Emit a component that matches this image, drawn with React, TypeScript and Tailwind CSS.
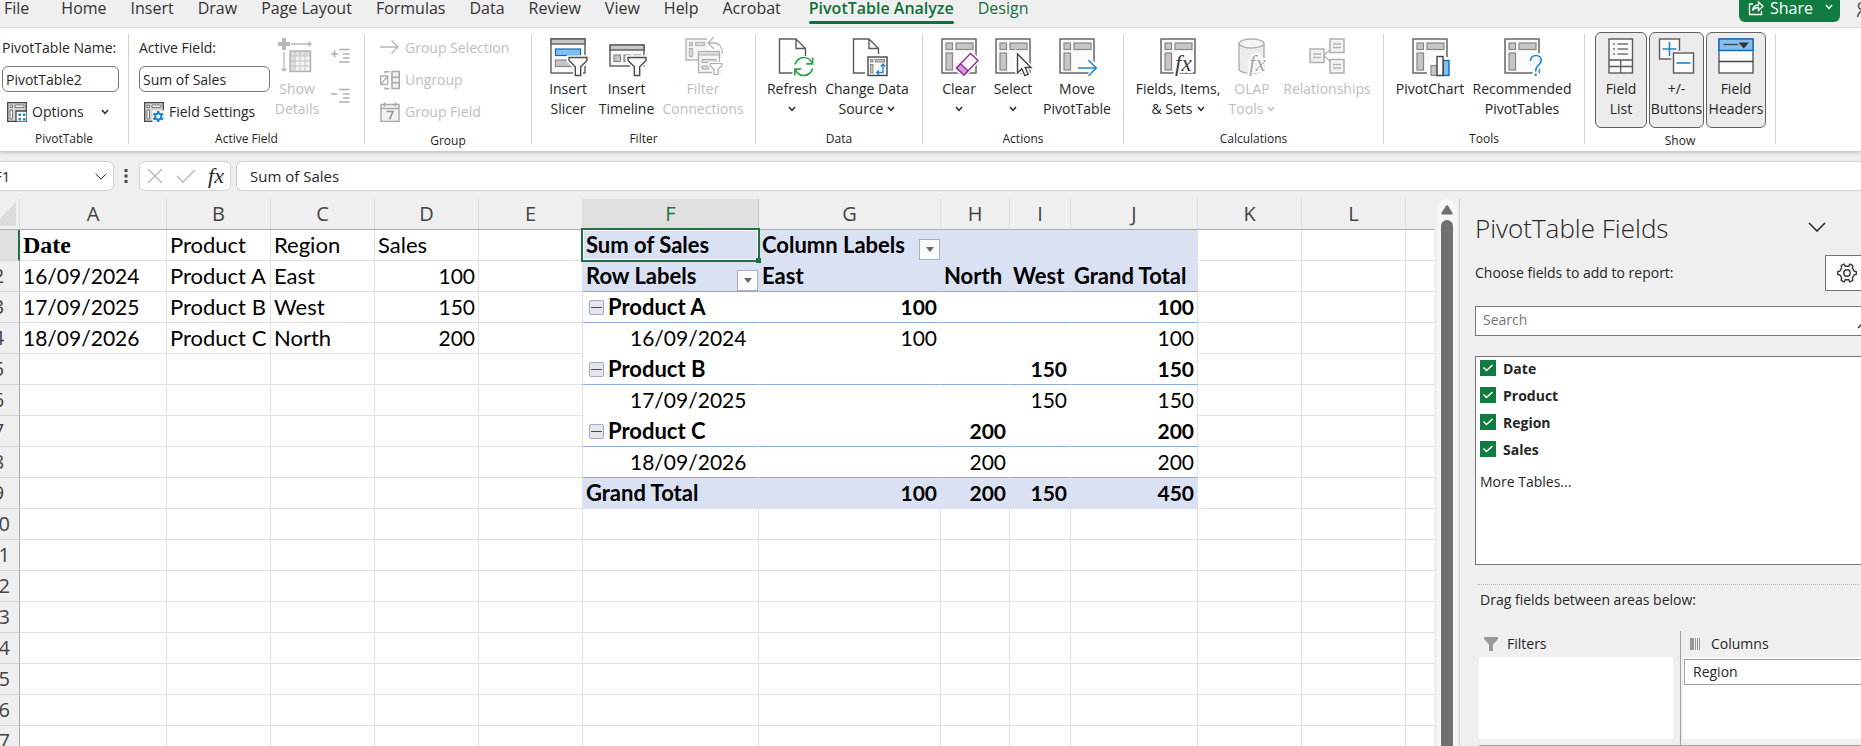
import { useState } from 'react';
import type { ReactNode } from 'react';

type IconProps = { className?: string };

/* ---------- small glyphs ---------- */

function Caret({ className = '' }: IconProps) {
  return (
    <svg viewBox="0 0 8 6" className={`inline-block h-[6px] w-[8px] ${className}`} fill="none" stroke="currentColor" strokeWidth="1.5">
      <path d="M1 1l3 3.4L7 1" />
    </svg>
  );
}

function Chevron({ className = '' }: IconProps) {
  return (
    <svg viewBox="0 0 18 10" className={className} fill="none" stroke="currentColor" strokeWidth="1.5">
      <path d="M1 1l8 8 8-8" />
    </svg>
  );
}

/* ---------- ribbon icons, 40 x 41 ---------- */

function BigIcon({ children }: { children: ReactNode }) {
  return (
    <svg viewBox="0 0 40 41" className="h-[41px] w-[40px] shrink-0 overflow-visible" fill="none">
      {children}
    </svg>
  );
}

function PivotBase() {
  return (
    <>
      <rect x="3" y="1" width="34" height="34" fill="#fafafa" stroke="#5b5b5b" strokeWidth="1.4" />
      <g fill="#c8c6c4" stroke="#8a8886" strokeWidth="1.2">
        <rect x="7" y="5" width="6.5" height="6.5" />
        <rect x="17" y="5" width="17" height="6.5" />
        <rect x="7" y="15" width="6.5" height="17" />
      </g>
    </>
  );
}

const FUNNEL = 'M21 19.5h18v3l-6.3 6.3v8.7h-5.4v-8.7L21 22.5z';

function Funnel() {
  return (
    <>
      <path d={FUNNEL} stroke="#fff" strokeWidth="4.5" />
      <path d={FUNNEL} fill="#fafafa" stroke="#4a4a4a" strokeWidth="1.4" />
    </>
  );
}

function SlicerIcon() {
  return (
    <BigIcon>
      <rect x="3" y="1" width="34" height="34" fill="#fafafa" stroke="#5b5b5b" strokeWidth="1.4" />
      <rect x="3" y="1" width="34" height="5" fill="#c8c6c4" stroke="#5b5b5b" strokeWidth="1.4" />
      <rect x="7.5" y="11" width="25" height="6.5" fill="#83beec" stroke="#0f6cbd" strokeWidth="1.2" />
      <rect x="7.5" y="22" width="18" height="6.5" fill="#c8c6c4" stroke="#8a8886" strokeWidth="1.2" />
      <Funnel />
    </BigIcon>
  );
}

function TimelineIcon() {
  return (
    <BigIcon>
      <rect x="3" y="7" width="34" height="21" fill="#fafafa" stroke="#5b5b5b" strokeWidth="1.4" />
      <rect x="3" y="7" width="34" height="5" fill="#c8c6c4" stroke="#5b5b5b" strokeWidth="1.4" />
      <g fill="#c8c6c4" stroke="#8a8886" strokeWidth="1.2">
        <rect x="7" y="17" width="6.5" height="6.5" />
        <rect x="17" y="17" width="6.5" height="6.5" />
        <rect x="27" y="17" width="6.5" height="6.5" />
      </g>
      <Funnel />
    </BigIcon>
  );
}

function ConnectionsIcon() {
  const funnel = 'M27 25.5h12v2l-4 4v5h-4v-5l-4-4z';
  return (
    <BigIcon>
      <path d="M24 1H3v21h12V12h9z" fill="#f5f5f5" />
      <path d="M24 1H3v21h12" stroke="#b5b5b5" strokeWidth="1.4" />
      <g fill="#dcdcdc" stroke="#b5b5b5" strokeWidth="1.2">
        <rect x="6.5" y="4.5" width="3" height="3" />
        <rect x="12.5" y="4.5" width="9" height="3" />
        <rect x="6.5" y="10.5" width="3" height="8" />
      </g>
      <path d="M31-1l-6 6 6 6M25.5 5H31c5 0 8.500 4 8.500 11" stroke="#b5b5b5" strokeWidth="1.3" />
      <rect x="15.5" y="13.5" width="21" height="21" fill="#f5f5f5" stroke="#b0b0b0" strokeWidth="1.4" />
      <rect x="15.5" y="13.5" width="21" height="3.5" fill="#dcdcdc" stroke="#b0b0b0" />
      <path d="M19 21.5h14v3H19zM19 28h7v3h-7z" fill="#dcdcdc" stroke="#a8a8a8" />
      <path d={funnel} stroke="#fff" strokeWidth="3.5" />
      <path d={funnel} fill="#fafafa" stroke="#b0b0b0" strokeWidth="1.2" />
    </BigIcon>
  );
}

function RefreshIcon() {
  return (
    <BigIcon>
      <path d="M20.5 35H7.5V1H24l9.500 9.500V18M24 1v9.500h9.500" stroke="#5b5b5b" strokeWidth="1.4" />
      <path d="M23 26.500c1-4 4.600-7 8.800-7 4 0 7 2.500 8.400 6M40.600 19.500v6.300h-6.300M40.600 30.500c-1 4-4.600 7-8.800 7-4 0-7-2.500-8.400-6M22.800 37.500v-6.300h6.300" stroke="#2f9e4f" strokeWidth="1.7" />
    </BigIcon>
  );
}

function SourceIcon() {
  return (
    <BigIcon>
      <path d="M18 35H6.500V1H22l9.500 9.500V16M22 1v9.500h9.500" stroke="#5b5b5b" strokeWidth="1.4" />
      <rect x="21" y="19" width="19" height="18.5" fill="#fafafa" stroke="#444" strokeWidth="1.4" />
      <g fill="#c8c6c4" stroke="#8a8886">
        <rect x="23.5" y="21.5" width="2.5" height="2.5" />
        <rect x="28.5" y="21.5" width="9" height="2.5" />
        <rect x="23.5" y="26.5" width="2.5" height="8.5" />
      </g>
      <path d="M30 34.500h6v-8M33.800 28.500l2.200-2.400 2.200 2.400M32 32.300l-2.300 2.200 2.300 2.200" stroke="#1f86cf" strokeWidth="1.4" />
    </BigIcon>
  );
}

function ClearIcon() {
  return (
    <BigIcon>
      <PivotBase />
      <path d="M17 30.500L31.500 15l8 7L25 38z" fill="#fff" stroke="#fff" strokeWidth="4" />
      <path d="M17.500 30L31.500 15.500l7.500 7L25 37z" fill="#fff" stroke="#9b2fa5" strokeWidth="1.5" />
      <path d="M17.500 30l4-4.200 7.500 7L25 37z" fill="#d59bdb" stroke="#9b2fa5" strokeWidth="1.5" />
    </BigIcon>
  );
}

function SelectIcon() {
  const d = 'M24.500 16v19l4.300-4.200 3 6.800 3.400-1.500-3-6.600h5.800z';
  return (
    <BigIcon>
      <PivotBase />
      <path d={d} stroke="#fff" strokeWidth="4.5" />
      <path d={d} fill="#fff" stroke="#444" strokeWidth="1.4" />
    </BigIcon>
  );
}

function MoveIcon() {
  return (
    <BigIcon>
      <PivotBase />
      <path d="M20 30h20M31 21l9 9-9 9" stroke="#fff" strokeWidth="5" />
      <path d="M21 30h18M31.500 22.200l7.800 7.800-7.800 7.800" stroke="#1f86cf" strokeWidth="1.6" />
    </BigIcon>
  );
}

function FxMark({ fill }: { fill: string }) {
  return (
    <text x="17" y="33" fontFamily="Liberation Serif, serif" fontStyle="italic" fontSize="23" fill={fill} stroke="#fff" strokeWidth="4" paintOrder="stroke">
      fx
    </text>
  );
}

function FieldsIcon() {
  return (
    <BigIcon>
      <PivotBase />
      <FxMark fill="#3b3b3b" />
    </BigIcon>
  );
}

function OlapIcon() {
  return (
    <BigIcon>
      <path d="M7 5.500v25.500c0 2.500 5.500 4.500 12.500 4.500S32 33.500 32 31V5.500" fill="#ececec" stroke="#b0b0b0" strokeWidth="1.4" />
      <ellipse cx="19.5" cy="5.5" rx="12.5" ry="4.5" fill="#f4f4f4" stroke="#b0b0b0" strokeWidth="1.4" />
      <FxMark fill="#a8a8a8" />
    </BigIcon>
  );
}

function RelationshipsIcon() {
  return (
    <BigIcon>
      <path d="M17 17.500l7-7M17 17.500l7 7" stroke="#b5b5b5" strokeWidth="1.4" />
      <g fill="#f2f2f2" stroke="#b0b0b0" strokeWidth="1.5">
        <rect x="3" y="11" width="14" height="13.5" />
        <rect x="23" y="1" width="14" height="13.5" />
        <rect x="23" y="21.5" width="14" height="13.5" />
      </g>
      <path d="M6 16h8M6 19.500h8M26 6h8M26 9.500h8M26 26.500h8M26 30h8" stroke="#b5b5b5" strokeWidth="1.3" />
    </BigIcon>
  );
}

function ChartIcon() {
  return (
    <BigIcon>
      <PivotBase />
      <path d="M18.500 38V25.500h6v-9h8v4h7V38z" fill="#fff" stroke="#fff" strokeWidth="3" />
      <rect x="21" y="27.5" width="6" height="10" fill="#c8c6c4" stroke="#8a8886" strokeWidth="1.2" />
      <rect x="33" y="22.5" width="6" height="15" fill="#83beec" stroke="#0f6cbd" strokeWidth="1.4" />
      <rect x="27" y="18.5" width="6" height="19" fill="#fff" stroke="#444" strokeWidth="1.4" />
    </BigIcon>
  );
}

function RecommendedIcon() {
  const d = 'M28.500 23c0-3.400 2.300-5.500 5.400-5.500s5.400 2 5.400 5c0 4.500-5.600 4.800-5.600 9.500v1.500';
  return (
    <BigIcon>
      <PivotBase />
      <path d={d} stroke="#fff" strokeWidth="5.5" />
      <path d="M33.700 34v4" stroke="#fff" strokeWidth="6" />
      <path d={d} stroke="#1f86cf" strokeWidth="1.7" />
      <path d="M33.700 35.500v2.500" stroke="#1f86cf" strokeWidth="2" />
    </BigIcon>
  );
}

function FieldListIcon() {
  return (
    <BigIcon>
      <rect x="8" y="1" width="23.5" height="34" fill="#fafafa" stroke="#5b5b5b" strokeWidth="1.4" />
      <path d="M8 22h23.500M8 28.500h23.500M19.700 22v13" stroke="#5b5b5b" strokeWidth="1.3" />
      <path d="M12 6h2M16.500 6H27M12 11h2M16.500 11H27M12 16h2M16.500 16H27" stroke="#767676" strokeWidth="1.3" />
    </BigIcon>
  );
}

function PlusMinusIcon() {
  return (
    <BigIcon>
      <rect x="2.5" y="1" width="20" height="20" fill="#fafafa" stroke="#5b5b5b" strokeWidth="1.4" />
      <path d="M12.500 4v14M5.500 11h14" stroke="#1f86cf" strokeWidth="1.6" />
      <rect x="16.5" y="15" width="20" height="20" fill="#fafafa" stroke="#ebebeb" strokeWidth="4.5" />
      <rect x="16.5" y="15" width="20" height="20" fill="#fafafa" stroke="#5b5b5b" strokeWidth="1.4" />
      <path d="M19.500 25h14" stroke="#1f86cf" strokeWidth="1.6" />
    </BigIcon>
  );
}

function HeadersIcon() {
  return (
    <BigIcon>
      <rect x="3" y="1" width="34" height="34" fill="#fafafa" stroke="#5b5b5b" strokeWidth="1.4" />
      <path d="M3 23.500h34" stroke="#444" strokeWidth="1.4" />
      <rect x="3" y="1" width="34" height="11.5" fill="#83beec" stroke="#0f6cbd" strokeWidth="1.4" />
      <path d="M7.500 6.500H22" stroke="#444" strokeWidth="1.3" />
      <path d="M22.500 4.500h10.500l-5.200 6z" fill="#333" />
    </BigIcon>
  );
}

function ShowDetailsIcon() {
  return (
    <BigIcon>
      <path d="M7 0v12M1 6h12" stroke="#b8b8b8" strokeWidth="4" />
      <path d="M14 6h20M31.500 3.500L34 6l-2.500 2.500M7 14v19M4.500 30.500L7 33l2.500-2.500" stroke="#b8b8b8" strokeWidth="1.3" />
      <rect x="13" y="13" width="20.5" height="20.5" fill="#f2f2f2" />
      <path d="M13 13h20.500v5H13zM13 18h5v15.500h-5z" fill="#dcdcdc" />
      <path d="M13 18h20.500M13 23h20.500M13 28h20.500M18 13v20.500M23 13v20.500M28 13v20.500" stroke="#c4c4c4" />
      <rect x="13" y="13" width="20.5" height="20.5" stroke="#b0b0b0" strokeWidth="1.4" />
    </BigIcon>
  );
}

/* ---------- ribbon icons, 20 x 20 ---------- */

function SmallIcon({ children }: { children: ReactNode }) {
  return (
    <svg viewBox="0 0 20 20" className="h-5 w-5 shrink-0" fill="none">
      {children}
    </svg>
  );
}

function SmallPivot() {
  return (
    <>
      <path d="M.7.7h18.600v18.600H.7z" fill="#d6d4d2" stroke="#444" strokeWidth="1.3" />
      <path d="M3 3h2.500v2.500H3zM8 3h9v2.500H8zM3 8h2.500v9H3z" fill="#fafafa" stroke="#777" />
    </>
  );
}

function OptionsIcon() {
  return (
    <SmallIcon>
      <SmallPivot />
      <path d="M9 9h11v11H9z" fill="#fff" stroke="#444" strokeWidth="1.3" />
      <path d="M11.500 11.500h2.500v2.500h-2.500zM16 11.500h2.500v2.500H16zM11.500 16h2.500v2.500h-2.500zM16 16h2.500v2.500H16z" fill="#1f86cf" />
    </SmallIcon>
  );
}

function SettingsIcon() {
  return (
    <SmallIcon>
      <SmallPivot />
      <path d="M8.500 8.500H20V20H8.500z" fill="#fff" />
      <path d="M14.200 9v11M9.400 11.700l9.600 5.600M9.400 17.300l9.600-5.600" stroke="#1f86cf" strokeWidth="2.6" />
      <circle cx="14.2" cy="14.5" r="3" fill="#fff" stroke="#1f86cf" strokeWidth="2" />
    </SmallIcon>
  );
}

function ArrowIcon() {
  return (
    <SmallIcon>
      <path d="M0 9h18M11.500 2.500L18 9l-6.500 6.500" stroke="#b5b5b5" strokeWidth="1.4" />
    </SmallIcon>
  );
}

function UngroupIcon() {
  return (
    <SmallIcon>
      <path d="M.7 6h7v8.500h-7zM1.500 13.500l5.500-6.500M5 3.500V1.700h4.500M5 17v1.800h4.500" stroke="#b0b0b0" strokeWidth="1.4" />
      <path d="M12 1.500h7.300v17H12zM12 7.200h7.300M12 12.800h7.300" fill="#f2f2f2" stroke="#a8a8a8" strokeWidth="1.6" />
    </SmallIcon>
  );
}

function CalendarIcon() {
  return (
    <SmallIcon>
      <path d="M1 2.500h18v17H1zM1 6.500h18M4.500.5v4M15.500.5v4" fill="#f2f2f2" stroke="#a8a8a8" strokeWidth="1.4" />
      <path d="M6.500 9.500h6.500l-3.500 8" stroke="#999" strokeWidth="1.7" />
    </SmallIcon>
  );
}

function IndentIcon({ plus }: { plus?: boolean }) {
  return (
    <svg viewBox="0 0 19 16" className="h-4 w-[19px]" fill="none" stroke="#b0b0b0" strokeWidth="1.4">
      <path d="M8 1.500h10.500M12 6h6.500M12 10h6.500M8 14h10.500" />
      <path d={plus ? 'M0 6h7M3.500 2.500v7' : 'M0 6h6'} strokeWidth="1.6" />
    </svg>
  );
}

/* ---------- ribbon pieces ---------- */

function Group({ label, className, children }: { label: string; className: string; children: ReactNode }) {
  return (
    <>
      <section aria-label={label} className={`flex shrink-0 flex-col ${className}`}>
        <div className="flex h-24">{children}</div>
        <div className="text-center text-xs leading-[25px] text-[#262626]">{label}</div>
      </section>
      <div className="mt-0.5 h-[110px] w-px shrink-0 bg-[#d1d1d1]" />
    </>
  );
}

type BigButtonProps = {
  icon: ReactNode;
  lines: [string, string?];
  className: string;
  caret?: boolean;
  disabled?: boolean;
};

function BigButton({ icon, lines, className, caret, disabled }: BigButtonProps) {
  return (
    <button
      type="button"
      disabled={disabled}
      className={`flex shrink-0 flex-col items-center pt-1.5 text-sm leading-5 whitespace-nowrap ${disabled ? 'text-[#bdbdbd]' : 'text-[#262626]'} ${className}`}
    >
      {icon}
      <span>{lines[0]}</span>
      <span className="flex h-5 items-center gap-1">
        {lines[1]}
        {caret && <Caret />}
      </span>
    </button>
  );
}

function ToggleButton({ icon, lines, className }: BigButtonProps) {
  return (
    <button
      type="button"
      aria-pressed="true"
      className={`flex h-24 shrink-0 flex-col items-center rounded-md border border-[#616161] bg-[#ebebeb] pt-[5px] text-sm leading-5 whitespace-nowrap text-[#262626] ${className}`}
    >
      {icon}
      <span>{lines[0]}</span>
      <span>{lines[1]}</span>
    </button>
  );
}

function GroupRow({ icon, label }: { icon: ReactNode; label: string }) {
  return (
    <button type="button" disabled className="flex h-8 items-center gap-[5px] text-sm whitespace-nowrap text-[#bdbdbd]">
      {icon}
      {label}
    </button>
  );
}

const TABS = ['Home', 'Insert', 'Draw', 'Page Layout', 'Formulas', 'Data', 'Review', 'View', 'Help', 'Acrobat'];

function TabBar() {
  return (
    <nav className="flex h-7 shrink-0 items-start border-b border-[#dcdcdc] pl-1 text-base leading-4 whitespace-nowrap text-[#333]">
      <a href="#file" className="mr-8">File</a>
      <div className="flex gap-6">
        {TABS.map((tab) => (
          <a key={tab} href={`#${tab.toLowerCase().replace(' ', '-')}`}>{tab}</a>
        ))}
        <a href="#analyze" aria-current="page" className="ml-1 flex h-6 flex-col justify-between font-semibold text-[#0f703b]">
          PivotTable Analyze
          <span className="h-[3px] rounded-full bg-[#0f703b]" />
        </a>
        <a href="#design" className="text-[#0f703b]">Design</a>
      </div>
      <div className="ml-auto flex items-start">
        <button type="button" className="flex h-[22px] w-[101px] items-start rounded-b-md bg-[#107c41] pl-[9px] font-medium text-white">
          <svg viewBox="0 0 16 16" className="h-4 w-4" fill="none" stroke="currentColor" strokeWidth="1.3">
            <path d="M5 4H1.500v10.500h12V11" />
            <path d="M4.500 10.500c.5-3.500 2.500-5.500 6-5.500V2l4.500 4.300-4.500 4.200v-3c-2.500 0-4.500.8-6 3z" />
          </svg>
          <span className="ml-1.5">Share</span>
          <Caret className="mt-1 ml-3" />
        </button>
        <svg viewBox="0 0 21 18" className="h-[18px] w-[21px]" fill="none" stroke="#444" strokeWidth="1.4">
          <path d="M17.500 17c.5-3 2-5 4.500-6" />
          <circle cx="22" cy="6" r="3.5" />
        </svg>
      </div>
    </nav>
  );
}

function Ribbon() {
  return (
    <div className="relative z-20 flex h-[123px] shrink-0 bg-white pt-1 shadow-[0_2px_3px_rgba(0,0,0,0.18)]">
      <Group label="PivotTable" className="w-32">
        <div className="flex flex-col pt-1.5 pl-0.5 text-sm text-[#262626]">
          <label htmlFor="pivot-name" className="leading-5">PivotTable Name:</label>
          <input id="pivot-name" defaultValue="PivotTable2" className="mt-2 h-[26px] w-[117px] rounded-md border border-[#767676] bg-white px-[3px]" />
          <button type="button" className="mt-2 flex h-6 items-center gap-[5px] pl-[5px]">
            <OptionsIcon />
            Options
            <Caret className="ml-3" />
          </button>
        </div>
      </Group>

      <Group label="Active Field" className="w-[235px]">
        <div className="flex w-[142px] flex-col pt-1.5 pl-[10px] text-sm whitespace-nowrap text-[#262626]">
          <label htmlFor="active-field" className="leading-5">Active Field:</label>
          <input id="active-field" defaultValue="Sum of Sales" className="mt-2 h-[26px] w-[131px] rounded-md border border-[#767676] bg-white px-[3px]" />
          <button type="button" className="mt-2 flex h-6 items-center gap-[5px] pl-[5px]">
            <SettingsIcon />
            Field Settings
          </button>
        </div>
        <BigButton icon={<ShowDetailsIcon />} lines={['Show', 'Details']} className="w-[52px]" disabled />
        <div className="flex flex-col gap-6 pt-4 pl-2">
          <button type="button" disabled aria-label="Expand Field"><IndentIcon plus /></button>
          <button type="button" disabled aria-label="Collapse Field"><IndentIcon /></button>
        </div>
      </Group>

      <Group label="Group" className="w-[166px]">
        <div className="flex flex-col pl-[15px]">
          <GroupRow icon={<ArrowIcon />} label="Group Selection" />
          <GroupRow icon={<UngroupIcon />} label="Ungroup" />
          <GroupRow icon={<CalendarIcon />} label="Group Field" />
        </div>
      </Group>

      <Group label="Filter" className="w-[223px]">
        <div className="flex pl-3">
          <BigButton icon={<SlicerIcon />} lines={['Insert', 'Slicer']} className="w-12" />
          <BigButton icon={<TimelineIcon />} lines={['Insert', 'Timeline']} className="w-[69px]" />
          <BigButton icon={<ConnectionsIcon />} lines={['Filter', 'Connections']} className="w-[84px]" disabled />
        </div>
      </Group>

      <Group label="Data" className="w-[166px]">
        <div className="flex pl-2">
          <BigButton icon={<RefreshIcon />} lines={['Refresh']} className="w-14" caret />
          <BigButton icon={<SourceIcon />} lines={['Change Data', 'Source']} className="w-[94px]" caret />
        </div>
      </Group>

      <Group label="Actions" className="w-[200px]">
        <div className="flex pl-[10px]">
          <BigButton icon={<ClearIcon />} lines={['Clear']} className="w-[52px]" caret />
          <BigButton icon={<SelectIcon />} lines={['Select']} className="w-14" caret />
          <BigButton icon={<MoveIcon />} lines={['Move', 'PivotTable']} className="w-[72px]" />
        </div>
      </Group>

      <Group label="Calculations" className="w-[259px]">
        <div className="flex pl-2">
          <BigButton icon={<FieldsIcon />} lines={['Fields, Items,', '& Sets']} className="w-[92px]" caret />
          <BigButton icon={<OlapIcon />} lines={['OLAP', 'Tools']} className="w-14" caret disabled />
          <BigButton icon={<RelationshipsIcon />} lines={['Relationships']} className="w-[94px]" disabled />
        </div>
      </Group>

      <Group label="Tools" className="w-[200px]">
        <div className="flex pl-2">
          <BigButton icon={<ChartIcon />} lines={['PivotChart']} className="w-[76px]" />
          <BigButton icon={<RecommendedIcon />} lines={['Recommended', 'PivotTables']} className="w-[108px]" />
        </div>
      </Group>

      <Group label="Show" className="w-[190px]">
        <div className="flex gap-0.5 pl-[10px]">
          <ToggleButton icon={<FieldListIcon />} lines={['Field', 'List']} className="w-[52px]" />
          <ToggleButton icon={<PlusMinusIcon />} lines={['+/-', 'Buttons']} className="w-[55px]" />
          <ToggleButton icon={<HeadersIcon />} lines={['Field', 'Headers']} className="w-[60px]" />
        </div>
      </Group>
    </div>
  );
}

function FormulaBar() {
  return (
    <div className="flex h-10 shrink-0 items-end overflow-hidden text-[15px] text-[#262626]">
      <div className="-ml-3 flex h-[30px] w-[126px] items-center justify-between rounded-md border border-[#d1d1d1] bg-white pr-1.5 pl-[5px]">
        <input aria-label="Name Box" defaultValue="F1" className="w-20 bg-transparent" />
        <Chevron className="h-[7px] w-3 text-[#222]" />
      </div>
      <svg viewBox="0 0 4 14" className="mr-[11px] mb-2 ml-[10px] h-[14px] w-1" fill="#444">
        <path d="M.5 0h3v3h-3zM.5 5.500h3v3h-3zM.5 11h3v3h-3z" />
      </svg>
      <div className="flex h-[30px] w-[92px] items-center justify-between rounded-md border border-[#d1d1d1] bg-white pr-1.5 pl-[7px]">
        <button type="button" aria-label="Cancel">
          <svg viewBox="0 0 16 16" className="h-4 w-4" stroke="#b5b5b5" strokeWidth="1.4"><path d="M1 1l14 14M15 1L1 15" /></svg>
        </button>
        <button type="button" aria-label="Enter">
          <svg viewBox="0 0 20 16" className="h-4 w-5" fill="none" stroke="#b5b5b5" strokeWidth="1.4"><path d="M1 8l6 6L19 2" /></svg>
        </button>
        <button type="button" className="font-['Liberation_Serif',serif] text-[22px] leading-6 italic">fx</button>
      </div>
      <input
        aria-label="Formula Bar"
        defaultValue="Sum of Sales"
        className="ml-[5px] h-[30px] min-w-0 flex-1 rounded-l-md border border-r-0 border-[#d1d1d1] bg-white pl-[13px]"
      />
    </div>
  );
}

/* ---------- sheet ---------- */

const COLS = [
  { id: 'A', width: 147 },
  { id: 'B', width: 104 },
  { id: 'C', width: 104 },
  { id: 'D', width: 104 },
  { id: 'E', width: 104 },
  { id: 'F', width: 176 },
  { id: 'G', width: 182 },
  { id: 'H', width: 69 },
  { id: 'I', width: 61 },
  { id: 'J', width: 127 },
  { id: 'K', width: 104 },
  { id: 'L', width: 104 },
  { id: '', width: 104 },
];

const CELLS: Record<string, string> = {
  A1: 'Date', B1: 'Product', C1: 'Region', D1: 'Sales',
  A2: '16/09/2024', B2: 'Product A', C2: 'East', D2: '100',
  A3: '17/09/2025', B3: 'Product B', C3: 'West', D3: '150',
  A4: '18/09/2026', B4: 'Product C', C4: 'North', D4: '200',
  F1: 'Sum of Sales', G1: 'Column Labels',
  F2: 'Row Labels', G2: 'East', H2: 'North', I2: 'West', J2: 'Grand Total',
  F3: 'Product A', G3: '100', J3: '100',
  F4: '16/09/2024', G4: '100', J4: '100',
  F5: 'Product B', I5: '150', J5: '150',
  F6: '17/09/2025', I6: '150', J6: '150',
  F7: 'Product C', H7: '200', J7: '200',
  F8: '18/09/2026', H8: '200', J8: '200',
  F9: 'Grand Total', G9: '100', H9: '200', I9: '150', J9: '450',
};

const PIVOT_COLS = 'FGHIJ';
const SHADED_ROWS = [1, 2, 9];
const RULED_ROWS = [2, 3, 5, 7, 8];
const PRODUCT_ROWS = [3, 5, 7];

function cellClass(col: string, row: number) {
  const value = CELLS[col + row] ?? '';
  const inPivot = col !== '' && PIVOT_COLS.includes(col) && row <= 9;
  const shaded = SHADED_ROWS.includes(row);
  const classes = [
    /^\d+$/.test(value) ? 'text-right' : 'text-left',
    /^\d/.test(value) ? 'text-[21px]' : 'text-[22px]',
  ];

  if (!inPivot) {
    classes.push('bg-white border-b-[#e0e0e0]');
    classes.push(col === 'E' && shaded ? 'border-r-[#d9e1f2]' : 'border-r-[#e0e0e0]');
    return classes.join(' ');
  }
  classes.push(shaded ? 'bg-[#d9e1f2]' : 'bg-white');
  if (shaded || PRODUCT_ROWS.includes(row)) classes.push('font-bold');
  if (RULED_ROWS.includes(row)) classes.push('border-b-[#8ea9db]');
  else classes.push(shaded ? 'border-b-[#d9e1f2]' : 'border-b-white');
  if (shaded) classes.push('border-r-[#d9e1f2]');
  else classes.push(col === 'J' ? 'border-r-[#e0e0e0]' : 'border-r-white');
  return classes.join(' ');
}

function FilterButton({ label }: { label: string }) {
  return (
    <button type="button" aria-label={label} className="absolute right-0 bottom-0 flex h-[21px] w-[21px] items-center justify-center border border-[#a6b0bf] bg-[#fafbfc]">
      <svg viewBox="0 0 8 5" className="h-[5px] w-2" fill="#666"><path d="M0 0h8L4 5z" /></svg>
    </button>
  );
}

function CellContent({ col, row }: { col: string; row: number }) {
  const ref = col + row;
  const value = CELLS[ref];

  if (ref === 'A1') return <span className="block font-['Liberation_Serif',serif] text-2xl leading-[30px] font-bold">{value}</span>;
  if (ref === 'G1' || ref === 'F2') {
    return (
      <>
        {value}
        <FilterButton label={`Filter ${value}`} />
      </>
    );
  }
  if (ref === 'F1') {
    return (
      <>
        {value}
        <span className="absolute -inset-y-0.5 -right-0.5 -left-0.5 z-10 border-2 border-[#1e7145] shadow-[inset_0_0_0_1px_#fff]" />
        <span className="absolute -right-[3px] -bottom-[3px] z-10 h-[5px] w-[5px] bg-[#1e7145]" />
      </>
    );
  }
  if (col === 'F' && PRODUCT_ROWS.includes(row)) {
    return (
      <span className="flex items-center gap-1 pl-[3px]">
        <button type="button" aria-label={`Collapse ${value}`} className="flex h-[15px] w-[15px] items-center justify-center rounded-xs border border-[#9aabc8] bg-[#e4e6ea]">
          <span className="h-px w-[11px] bg-[#3b4a6b]" />
        </button>
        {value}
      </span>
    );
  }
  if (col === 'F' && [4, 6, 8].includes(row)) return <span className="pl-11">{value}</span>;
  return <>{value}</>;
}

function Sheet() {
  return (
    <div className="min-w-0 flex-1 overflow-hidden">
      <table className="-ml-[22px] w-[1532px] table-fixed border-separate border-spacing-0 font-[Lato,sans-serif] leading-[30px] text-black">
        <colgroup>
          <col className="w-[42px]" />
          {COLS.map((c) => <col key={c.id} style={{ width: c.width }} />)}
        </colgroup>
        <thead className="font-['Open_Sans',sans-serif] text-xl leading-[30px] text-[#444]">
          <tr className="h-[31px]">
            <th className="relative border-r border-b border-r-[#dcdcdc] border-b-[#ababab] bg-[#efefef] p-0">
              <svg viewBox="0 0 24 24" className="absolute right-[3px] bottom-[3px] h-6 w-6" fill="#dcdcdc"><path d="M24 0v24H0z" /></svg>
            </th>
            {COLS.map((c) => (
              <th
                key={c.id}
                scope="col"
                className={`border-r border-b border-b-[#ababab] p-0 font-normal ${c.id === 'F' ? 'border-r-[#c4c4c4] bg-[#e0e0e0] text-[#1e7145]' : 'border-r-[#dcdcdc] bg-[#efefef]'}`}
              >
                {c.id}
              </th>
            ))}
          </tr>
        </thead>
        <tbody>
          {Array.from({ length: 17 }, (_, i) => i + 1).map((row) => (
            <tr key={row} className="h-[31px]">
              <th
                scope="row"
                className={`border-b border-b-[#d4d4d4] p-0 text-center font-['Open_Sans',sans-serif] text-xl leading-[30px] font-normal ${row === 1 ? 'border-r-2 border-r-[#1e7145] bg-[#e0e0e0] text-[#b5dfe0]' : 'border-r border-r-[#ababab] bg-[#efefef] text-[#444]'}`}
              >
                {row}
              </th>
              {COLS.map((c) => (
                <td key={c.id} className={`relative border-r border-b py-0 pr-[3px] pl-[3px] whitespace-nowrap ${cellClass(c.id, row)}`}>
                  <CellContent col={c.id} row={row} />
                </td>
              ))}
            </tr>
          ))}
        </tbody>
      </table>
    </div>
  );
}

function ScrollBar() {
  return (
    <div className="flex w-[26px] shrink-0 justify-center border-r border-[#d1d1d1] bg-[#efefef]">
      <div className="flex w-5 flex-col items-center rounded-t-full bg-[#f6f6f6] pt-[6px]">
        <svg viewBox="0 0 12 10" className="h-[10px] w-3" fill="#707070"><path d="M5 .8Q6-.6 7 .8l4.600 7.200Q12 9.500 10.500 9.500h-9Q0 9.500.4 8z" /></svg>
        <div className="mt-[5px] w-3 flex-1 rounded-t-full bg-[#707070]" />
      </div>
    </div>
  );
}

/* ---------- fields pane ---------- */

function FieldCheck({ name }: { name: string }) {
  const [checked, setChecked] = useState(true);
  return (
    <label className="flex h-[27px] items-start gap-[7px] text-sm leading-[18px] font-bold">
      <span className="relative h-4 w-4">
        <input
          type="checkbox"
          checked={checked}
          onChange={(e) => setChecked(e.target.checked)}
          className="block h-4 w-4 appearance-none border border-[#107c41] checked:bg-[#107c41]"
        />
        {checked && (
          <svg viewBox="0 0 16 16" className="pointer-events-none absolute inset-0" fill="none" stroke="#fff" strokeWidth="1.5">
            <path d="M3.500 7.500l3 3 6-5.500" />
          </svg>
        )}
      </span>
      {name}
    </label>
  );
}

function FieldsPane() {
  return (
    <aside className="w-[401px] shrink-0 overflow-hidden text-sm text-[#262626]">
      <div className="flex h-full w-[440px] flex-col pl-[15px]">
        <div className="flex items-start justify-between pt-[11px] pr-[74px]">
          <h2 className="text-[26px] leading-9 font-light">PivotTable Fields</h2>
          <button type="button" aria-label="Pane options" className="mt-3"><Chevron className="h-[10px] w-[18px]" /></button>
        </div>

        <div className="mt-[9px] flex h-9 items-center justify-between">
          <span>Choose fields to add to report:</span>
          <button type="button" aria-label="Tools" className="flex h-9 w-[75px] items-center border border-[#767676] bg-white pl-[11px]">
            <svg viewBox="0 0 20 20" className="h-5 w-5" fill="none" stroke="#333" strokeWidth="1.4">
              <path d="M7.200 1l.9 2.200h3.800l.9-2.200 3 1.700-.4 2.400 1.600 2.900 2.300.7v2.600l-2.300.7-1.600 2.900.4 2.400-3 1.700-.9-2.200H8.100L7.200 19l-3-1.700.4-2.400L3 12 .7 11.300V8.700L3 8l1.600-2.900-.4-2.400z" strokeLinejoin="round" />
              <circle cx="10" cy="10" r="3.2" />
            </svg>
          </button>
        </div>

        <div className="mt-[15px] flex h-[30px] shrink-0 items-center border border-[#767676] bg-white">
          <input type="search" aria-label="Search" placeholder="Search" className="h-full w-[381px] pb-1 pl-[7px] placeholder:text-[#767676]" />
          <svg viewBox="0 0 20 20" className="h-5 w-5" fill="none" stroke="#333" strokeWidth="1.5">
            <path d="M1 17l6-6" />
            <circle cx="12" cy="7" r="6" />
          </svg>
        </div>

        <div className="mt-5 flex h-[209px] shrink-0 flex-col items-start border border-[#767676] bg-white pt-[3px] pl-1">
          {['Date', 'Product', 'Region', 'Sales'].map((name) => <FieldCheck key={name} name={name} />)}
          <button type="button" className="mt-0.5 leading-6">More Tables...</button>
        </div>

        <div className="mt-[19px] ml-0.5 border-t border-dotted border-[#b5b5b5]" />
        <div className="mt-[5px] ml-[5px] leading-5">Drag fields between areas below:</div>

        <div className="mt-[21px] ml-1 flex min-h-0 flex-1 border-b border-[#a0a0a0]">
          <div className="w-[202px] border-r border-[#a0a0a0] pr-[7px]">
            <div className="flex h-[26px] items-center gap-[9px] pl-[5px]">
              <svg viewBox="0 0 14 14" className="h-[14px] w-[14px]" fill="#999"><path d="M0 0h14v2L9 7.500V14H5V7.500L0 2z" /></svg>
              Filters
            </div>
            <div className="h-[82px] bg-white" />
          </div>
          <div className="flex-1 pl-0.5">
            <div className="flex h-[26px] items-center gap-[11px] pl-[7px]">
              <svg viewBox="0 0 10 12" className="h-3 w-[10px]" fill="#999"><path d="M0 0h4v12H0zM5 0h1v12H5zM7 0h1v12H7zM9 0h1v12H9z" /></svg>
              Columns
            </div>
            <div className="h-[82px] bg-white pt-0.5 pl-px">
              <button type="button" className="flex h-[26px] w-full items-center border border-[#a0a0a0] bg-white pl-2">Region</button>
            </div>
          </div>
        </div>
      </div>
    </aside>
  );
}

export default function App() {
  return (
    <div className="flex h-screen flex-col overflow-hidden bg-[#efefef] font-['Open_Sans',sans-serif]">
      <TabBar />
      <Ribbon />
      <FormulaBar />
      <main className="flex min-h-0 flex-1 pt-2">
        <Sheet />
        <ScrollBar />
        <FieldsPane />
      </main>
    </div>
  );
}
